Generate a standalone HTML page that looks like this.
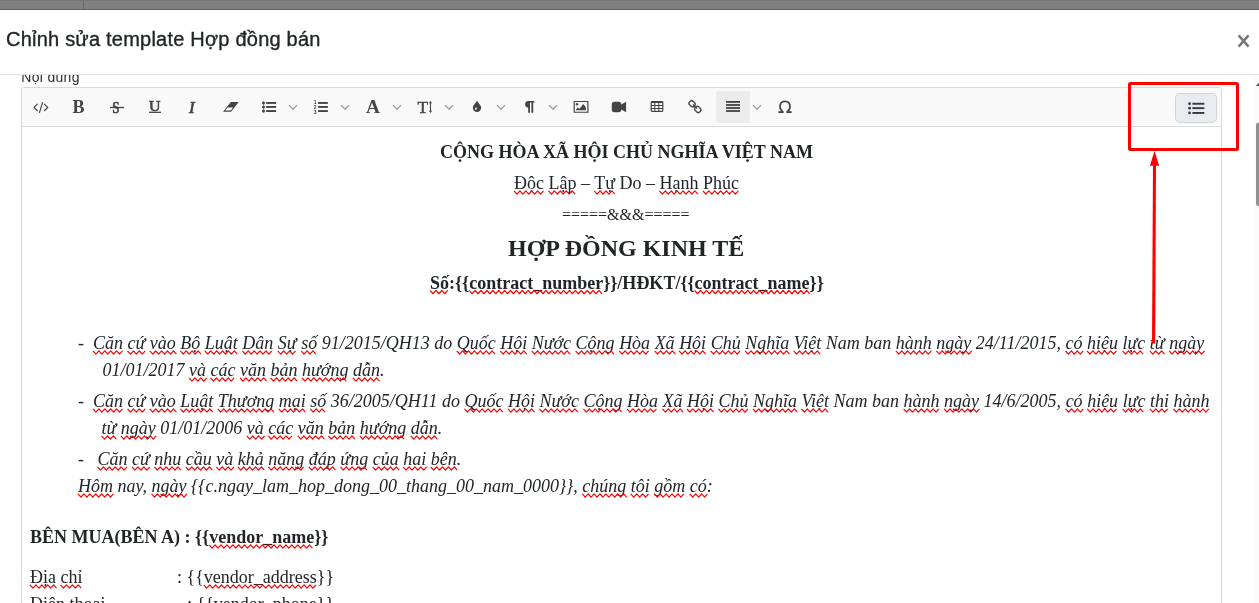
<!DOCTYPE html>
<html><head><meta charset="utf-8">
<style>
*{margin:0;padding:0;box-sizing:border-box}
html,body{width:1259px;height:603px;overflow:hidden;background:#fff}
body{position:relative;font-family:"Liberation Sans",sans-serif;color:#212529}
#doc,#tb,#title,#body{will-change:transform}
#title{-webkit-text-stroke:0.35px #212529;letter-spacing:0.22px}
.a{position:absolute}
.t{position:absolute;white-space:pre;line-height:20px}
.sf{font-family:"Liberation Serif",serif;color:#212529}
.it{font-style:italic}
.sq{}
#topbar{left:0;top:0;width:1259px;height:10px;background:#808080;border-top:1px solid #747474;border-bottom:1px solid #5f5f5f}
#title{left:6px;top:29px;font-size:20px;color:#212529}
#hdrline{left:0;top:74px;width:1259px;height:1px;background:#dee2e6}
#body{left:0;top:75px;width:1253px;height:528px;overflow:hidden}
#scroll{left:1253px;top:76px;width:6px;height:527px;background:#fafafa}
#editor{left:21px;top:12px;width:1201px;height:600px;border:1px solid #dadada;border-radius:3px;background:#fff}
#toolbar{left:0;top:0;width:1199px;height:37px;background:#f9f9f9;border-radius:2px 2px 0 0}
#tbline{left:0;top:38px;width:1199px;height:1px;background:#dadada}
</style></head><body>
<div class="a" id="topbar"></div>
<div class="a" style="left:83px;top:1px;width:1px;height:8px;background:#666"></div>
<div class="t" id="title">Chỉnh sửa template Hợp đồng bán</div>
<svg class="a" style="left:1236px;top:33px" width="16" height="16" viewBox="0 0 16 16"><path d="M2.6 2.4 L12.6 13.6 M12.6 2.4 L2.6 13.6" stroke="#777" stroke-width="2.5"/></svg>
<div class="a" id="hdrline"></div>
<div class="a" id="body">
  <div class="t" style="left:21.3px;top:-7.85px;font-size:14px;color:#2b2f33;letter-spacing:0.3px">Nội dung</div>
  <div class="a" id="editor">
    <div class="a" id="toolbar"></div><div class="a" id="tbline"></div>
  </div>
</div>
<div class="a" id="scroll"></div>

<svg id="tb" class="a" style="left:0;top:0" width="1259" height="603" viewBox="0 0 1259 603">
<g fill="none" stroke="#404040" stroke-width="1.15">
 <path d="M37.6 103.8 L34 107.4 L37.6 111 M44.1 103.8 L47.7 107.4 L44.1 111 M42.6 102.2 L39.4 112.8"/>
</g>
<path d="M719 91 H750 V123 H719 A3 3 0 0 1 716 120 V94 A3 3 0 0 1 719 91 Z" fill="#ececec"/>
<g font-family="Liberation Serif" fill="#444">
 <text x="72.6" y="113" font-size="18" font-weight="bold">B</text>
 <text x="112.2" y="113" font-size="17" stroke="#444" stroke-width="0.7" transform="translate(112.2 0) scale(0.78 1) translate(-112.2 0)">S</text>
 <text x="148.9" y="110.9" font-size="14.6" stroke="#444" stroke-width="0.6" transform="translate(148.9 0) scale(1.09 1) translate(-148.9 0)">U</text>
 <text x="189" y="112.9" font-size="16.8" font-style="italic" stroke="#444" stroke-width="0.7">I</text>
 <text x="366" y="113" font-size="18" font-weight="bold" transform="translate(366 0) scale(1.07 1) translate(-366 0)">A</text>
 <text x="417.6" y="112.8" font-size="17.4" stroke="#444" stroke-width="0.45">T</text>
 
</g>
<g stroke="#444" stroke-width="1.3" fill="none">
 <path d="M110 107.5 H124.2"/>
 <path d="M149 112.3 H161"/>
 <path d="M430.5 102 V112" stroke-width="1.1"/>
</g>
<g fill="#444">
 <path d="M428.9 103.3 L430.5 100.9 L432.1 103.3 Z M428.9 110.7 L430.5 113.1 L432.1 110.7 Z"/>
 <!-- eraser -->
 <path d="M230.9 102.1 L238.7 102.1 L231.1 111.7 L223 111.7 Z M227.6 107.6 L233.1 107.6 L230.8 110.6 L225.1 110.6 Z" fill-rule="evenodd"/>
 <!-- bullet list -->
 <circle cx="263.5" cy="102.9" r="1.5"/><circle cx="263.5" cy="106.9" r="1.5"/><circle cx="263.5" cy="111" r="1.5"/>
 <rect x="263.2" y="101" width="0.6" height="12" opacity="0.7"/>
 <rect x="266.1" y="102" width="10" height="1.9"/><rect x="266.1" y="106" width="10" height="1.9"/><rect x="266.1" y="110.1" width="10" height="1.9"/>
 <!-- numbered -->
 <rect x="318.1" y="102" width="9.8" height="1.9"/><rect x="318.1" y="106" width="9.8" height="1.9"/><rect x="318.1" y="110.1" width="9.8" height="1.9"/>
 <!-- drop -->
 <path d="M477 100.4 C478 103 481.2 105 481.2 107.8 A4.2 4.2 0 0 1 472.8 107.8 C472.8 105 476 103 477 100.4 Z M475 107.8 h1.8 v1.8 h-1.8 Z" fill-rule="evenodd"/>
 <!-- pilcrow -->
 <path d="M528.8 101 H534.3 V102.6 H533.2 V112.8 H531.4 V102.6 H530 V112.8 H528.2 V107.8 A3.4 3.4 0 0 1 528.8 101 Z"/>
 <!-- image -->
 <path d="M573.6 101 H588.5 V112.8 H573.6 Z M574.8 102.1 V111.7 H587.3 V102.1 Z" fill-rule="evenodd"/>
 <circle cx="577" cy="104.3" r="1.25"/>
 <path d="M576.1 110.3 V109.5 L577.9 107.5 L579.6 108.7 L583.3 104.1 L585.8 107.2 V110.3 Z"/>
 <!-- video -->
 <rect x="611.8" y="101.8" width="9.5" height="10.4" rx="2.6"/>
 <path d="M620 105.2 L626.1 101.8 V112.2 L620 108.8 Z"/>
 <!-- table -->
 <path d="M652 101 H662 A1.4 1.4 0 0 1 663.4 102.4 V110.5 A1.4 1.4 0 0 1 662 111.9 H652 A1.4 1.4 0 0 1 650.6 110.5 V102.4 A1.4 1.4 0 0 1 652 101 Z M651.8 103 V105 H654.3 V103 Z M655.3 103 V105 H658.3 V103 Z M659.3 103 V105 H662.2 V103 Z M651.8 105.9 V108 H654.3 V105.9 Z M655.3 105.9 V108 H658.3 V105.9 Z M659.3 105.9 V108 H662.2 V105.9 Z M651.8 108.9 V110.8 H654.3 V108.9 Z M655.3 108.9 V110.8 H658.3 V108.9 Z M659.3 108.9 V110.8 H662.2 V108.9 Z" fill-rule="evenodd"/>
 <!-- justify -->
 <rect x="726" y="101" width="14" height="1.8"/><rect x="726" y="104.1" width="14" height="1.8"/><rect x="726" y="107.1" width="14" height="1.8"/><rect x="726" y="110.1" width="14" height="1.8"/>
</g>
<g font-family="Liberation Sans" fill="#444" font-weight="bold" font-size="5">
 <text x="313.8" y="104.3">1</text><text x="313.8" y="108.8">2</text><text x="313.8" y="113.6">3</text>
</g>
<path d="M783 112.3 C781.2 111 780 109 780 106.6 C780 103.1 782.2 101.4 785 101.4 C787.8 101.4 790 103.1 790 106.6 C790 109 788.8 111 787 112.3 M778.3 112.2 H783.7 M786.3 112.2 H791.7" fill="none" stroke="#444" stroke-width="1.7"/>
<!-- link -->
<g fill="none" stroke="#444" stroke-width="1.35">
 <rect x="-3.1" y="-2.5" width="6.2" height="5" rx="2" transform="translate(692.1 103.7) rotate(45)"/>
 <rect x="-3.1" y="-2.5" width="6.2" height="5" rx="2" transform="translate(697.8 109.4) rotate(45)"/>
 <path d="M692.9 104.5 L697 108.6"/>
</g>
<!-- chevrons -->
<g fill="none" stroke="#909090" stroke-width="1.15">
 <path d="M289 105.2 L293 109.2 L297 105.2"/>
 <path d="M341 105.2 L345 109.2 L349 105.2"/>
 <path d="M393 105.2 L397 109.2 L401 105.2"/>
 <path d="M445 105.2 L449 109.2 L453 105.2"/>
 <path d="M497 105.2 L501 109.2 L505 105.2"/>
 <path d="M549 105.2 L553 109.2 L557 105.2"/>
 <path d="M753 105.2 L757 109.2 L761 105.2"/>
</g>
<!-- TOC button -->
<rect x="1175.5" y="93.5" width="41" height="29" rx="4.5" fill="#e9ecef" stroke="#ced4da" stroke-width="1"/>
<g fill="#343a40">
 <circle cx="1189.6" cy="103.7" r="1.4"/><circle cx="1189.6" cy="108.2" r="1.4"/><circle cx="1189.6" cy="112.9" r="1.4"/>
 <rect x="1192.4" y="102.8" width="11.9" height="1.9"/><rect x="1192.4" y="107.2" width="11.9" height="1.9"/><rect x="1192.4" y="112" width="11.9" height="1.9"/>
</g>
<!-- scrollbar -->
<path d="M1255.8 86 L1260 81.8 L1264.2 86 Z" fill="#505050"/>
<rect x="1256" y="122.5" width="8" height="83.7" rx="3" fill="#8f8f8f"/>
</svg>

<!-- document text (page coords) -->
<div id="doc">
<div class="t sf" style="left:440px;top:142px;font-size:18px;font-weight:bold">CỘNG HÒA XÃ HỘI CHỦ NGHĨA VIỆT NAM</div>
<div class="t sf" style="left:514px;top:173px;font-size:18px"><span class="sq">Độc</span> <span class="sq">Lập</span> – <span class="sq">Tự</span> Do – <span class="sq">Hạnh</span> <span class="sq">Phúc</span></div>
<div class="t sf" style="left:562px;top:205px;font-size:16px">=====&amp;&amp;&amp;=====</div>
<div class="t sf" style="left:508px;top:237.5px;font-size:24px;font-weight:bold">HỢP ĐỒNG KINH TẾ</div>
<div class="t sf" style="left:430px;top:272.6px;font-size:18px;font-weight:bold"><span class="sq">Số</span>:{{<span class="sq">contract_number</span>}}/HĐKT/{{<span class="sq">contract_name</span>}}</div>
<div class="t sf it" style="left:78px;top:333px;font-size:18px">-</div>
<div class="t sf it" style="left:93px;top:333px;font-size:18px"><span class="sq">Căn</span> <span class="sq">cứ</span> <span class="sq">vào</span> <span class="sq">Bộ</span> <span class="sq">Luật</span> <span class="sq">Dân</span> <span class="sq">Sự</span> <span class="sq">số</span> 91/2015/QH13 do <span class="sq">Quốc</span> <span class="sq">Hội</span> <span class="sq">Nước</span> <span class="sq">Cộng</span> <span class="sq">Hòa</span> <span class="sq">Xã</span> <span class="sq">Hội</span> <span class="sq">Chủ</span> <span class="sq">Nghĩa</span> <span class="sq">Việt</span> Nam ban <span class="sq">hành</span> <span class="sq">ngày</span> 24/11/2015, <span class="sq">có</span> <span class="sq">hiệu</span> <span class="sq">lực</span> <span class="sq">từ</span> <span class="sq">ngày</span></div>
<div class="t sf it" style="left:102.5px;top:360px;font-size:18px">01/01/2017 <span class="sq">và</span> <span class="sq">các</span> <span class="sq">văn</span> <span class="sq">bản</span> <span class="sq">hướng</span> <span class="sq">dẫn</span>.</div>
<div class="t sf it" style="left:78px;top:391px;font-size:18px">-</div>
<div class="t sf it" style="left:93px;top:391px;font-size:18px"><span class="sq">Căn</span> <span class="sq">cứ</span> <span class="sq">vào</span> <span class="sq">Luật</span> <span class="sq">Thương</span> <span class="sq">mại</span> <span class="sq">số</span> 36/2005/QH11 do <span class="sq">Quốc</span> <span class="sq">Hội</span> <span class="sq">Nước</span> <span class="sq">Cộng</span> <span class="sq">Hòa</span> <span class="sq">Xã</span> <span class="sq">Hội</span> <span class="sq">Chủ</span> <span class="sq">Nghĩa</span> <span class="sq">Việt</span> Nam ban <span class="sq">hành</span> <span class="sq">ngày</span> 14/6/2005, <span class="sq">có</span> <span class="sq">hiệu</span> <span class="sq">lực</span> <span class="sq">thi</span> <span class="sq">hành</span></div>
<div class="t sf it" style="left:101.5px;top:418px;font-size:18px"><span class="sq">từ</span> <span class="sq">ngày</span> 01/01/2006 <span class="sq">và</span> <span class="sq">các</span> <span class="sq">văn</span> <span class="sq">bản</span> <span class="sq">hướng</span> <span class="sq">dẫn</span>.</div>
<div class="t sf it" style="left:78px;top:449px;font-size:18px">-</div>
<div class="t sf it" style="left:97.5px;top:449px;font-size:18px"><span class="sq">Căn</span> <span class="sq">cứ</span> <span class="sq">nhu</span> <span class="sq">cầu</span> <span class="sq">và</span> <span class="sq">khả</span> <span class="sq">năng</span> <span class="sq">đáp</span> <span class="sq">ứng</span> <span class="sq">của</span> <span class="sq">hai</span> <span class="sq">bên</span>.</div>
<div class="t sf it" style="left:78px;top:476px;font-size:18px"><span class="sq">Hôm</span> nay, <span class="sq">ngày</span> {{c.ngay_lam_hop_dong_00_thang_00_nam_0000}}, <span class="sq">chúng</span> <span class="sq">tôi</span> <span class="sq">gồm</span> <span class="sq">có</span>:</div>
<div class="t sf" style="left:30px;top:527px;font-size:18px;font-weight:bold">BÊN MUA(BÊN A) : {{<span class="sq">vendor_name</span>}}</div>
<div class="t sf" style="left:30px;top:567px;font-size:18px"><span class="sq">Địa</span> <span class="sq">chỉ</span></div>
<div class="t sf" style="left:177px;top:567px;font-size:18px">: {{<span class="sq">vendor_address</span>}}</div>
<div class="t sf" style="left:30px;top:594px;font-size:18px"><span class="sq">Điện</span> <span class="sq">thoại</span></div>
<div class="t sf" style="left:187px;top:594px;font-size:18px">: {{<span class="sq">vendor_phone</span>}}</div>
</div>
<svg id="ann" class="a" style="left:0;top:0" width="1259" height="603">
<rect x="1129.5" y="83.5" width="108" height="66" rx="1" fill="none" stroke="#ff0000" stroke-width="3"/>
<path d="M1154.5 151 L1159.1 165.7 L1149.9 165.7 Z" fill="#ff0000"/>
<path d="M1153 163 H1156 L1155.2 343.6 H1152 Z" fill="#ff0000"/>
</svg>
<svg id="sqs" class="a" style="left:0;top:0;will-change:transform" width="1259" height="603"><path d="M514.00 190.79 L516.95 194.14 L519.90 190.79 L522.85 194.14 L525.80 190.79 L528.75 194.14 L531.70 190.79 L534.65 194.14 L537.60 190.79 L540.55 194.14 L543.50 190.79 M548.50 190.79 L551.45 194.14 L554.40 190.79 L557.35 194.14 L560.30 190.79 L563.25 194.14 L566.20 190.79 L569.15 194.14 L572.10 190.79 L575.05 194.14 M594.17 190.79 L597.12 194.14 L600.07 190.79 L603.02 194.14 L605.97 190.79 L608.92 194.14 L611.87 190.79 L614.82 194.14 M659.44 190.79 L662.39 194.14 L665.34 190.79 L668.29 194.14 L671.24 190.79 L674.19 194.14 L677.14 190.79 L680.09 194.14 L683.04 190.79 L685.99 194.14 L688.94 190.79 L691.89 194.14 L694.84 190.79 L697.79 194.14 M702.94 190.79 L705.89 194.14 L708.84 190.79 L711.79 194.14 L714.74 190.79 L717.69 194.14 L720.64 190.79 L723.59 194.14 L726.54 190.79 L729.49 194.14 L732.44 190.79 L735.39 194.14 L738.34 190.79 M430.00 290.38 L432.95 293.73 L435.90 290.38 L438.85 293.73 L441.80 290.38 L444.75 293.73 L447.70 290.38 M469.20 290.38 L472.15 293.73 L475.10 290.38 L478.05 293.73 L481.00 290.38 L483.95 293.73 L486.90 290.38 L489.85 293.73 L492.80 290.38 L495.75 293.73 L498.70 290.38 L501.65 293.73 L504.60 290.38 L507.55 293.73 L510.50 290.38 L513.45 293.73 L516.40 290.38 L519.35 293.73 L522.30 290.38 L525.25 293.73 L528.20 290.38 L531.15 293.73 L534.10 290.38 L537.05 293.73 L540.00 290.38 L542.95 293.73 L545.90 290.38 L548.85 293.73 L551.80 290.38 L554.75 293.73 L557.70 290.38 L560.65 293.73 L563.60 290.38 L566.55 293.73 L569.50 290.38 L572.45 293.73 L575.40 290.38 L578.35 293.73 L581.30 290.38 L584.25 293.73 L587.20 290.38 L590.15 293.73 L593.10 290.38 L596.05 293.73 L599.00 290.38 L601.95 293.73 M694.58 290.38 L697.53 293.73 L700.48 290.38 L703.43 293.73 L706.38 290.38 L709.33 293.73 L712.28 290.38 L715.23 293.73 L718.18 290.38 L721.13 293.73 L724.08 290.38 L727.03 293.73 L729.98 290.38 L732.93 293.73 L735.88 290.38 L738.83 293.73 L741.78 290.38 L744.73 293.73 L747.68 290.38 L750.63 293.73 L753.58 290.38 L756.53 293.73 L759.48 290.38 L762.43 293.73 L765.38 290.38 L768.33 293.73 L771.28 290.38 L774.23 293.73 L777.18 290.38 L780.13 293.73 L783.08 290.38 L786.03 293.73 L788.98 290.38 L791.93 293.73 L794.88 290.38 L797.83 293.73 L800.78 290.38 L803.73 293.73 L806.68 290.38 L809.63 293.73 M93.00 350.79 L95.95 354.14 L98.90 350.79 L101.85 354.14 L104.80 350.79 L107.75 354.14 L110.70 350.79 L113.65 354.14 L116.60 350.79 L119.55 354.14 L122.50 350.79 M127.52 350.79 L130.47 354.14 L133.42 350.79 L136.37 354.14 L139.32 350.79 L142.27 354.14 L145.22 350.79 M149.83 350.79 L152.78 354.14 L155.73 350.79 L158.68 354.14 L161.63 350.79 L164.58 354.14 L167.53 350.79 L170.48 354.14 L173.43 350.79 L176.38 354.14 M180.33 350.79 L183.28 354.14 L186.23 350.79 L189.18 354.14 L192.13 350.79 L195.08 354.14 L198.03 350.79 L200.98 354.14 M204.83 350.79 L207.78 354.14 L210.73 350.79 L213.68 354.14 L216.63 350.79 L219.58 354.14 L222.53 350.79 L225.48 354.14 L228.43 350.79 L231.38 354.14 L234.33 350.79 L237.28 354.14 M242.34 350.79 L245.29 354.14 L248.24 350.79 L251.19 354.14 L254.14 350.79 L257.09 354.14 L260.04 350.79 L262.99 354.14 L265.94 350.79 L268.89 354.14 L271.84 350.79 M277.84 350.79 L280.79 354.14 L283.74 350.79 L286.69 354.14 L289.64 350.79 L292.59 354.14 L295.54 350.79 M301.17 350.79 L304.12 354.14 L307.07 350.79 L310.02 354.14 L312.97 350.79 L315.92 354.14 M456.69 350.79 L459.64 354.14 L462.59 350.79 L465.54 354.14 L468.49 350.79 L471.44 354.14 L474.39 350.79 L477.34 354.14 L480.29 350.79 L483.24 354.14 L486.19 350.79 L489.14 354.14 L492.09 350.79 L495.04 354.14 M500.19 350.79 L503.14 354.14 L506.09 350.79 L509.04 354.14 L511.99 350.79 L514.94 354.14 L517.89 350.79 L520.84 354.14 L523.79 350.79 L526.74 354.14 M531.69 350.79 L534.64 354.14 L537.59 350.79 L540.54 354.14 L543.49 350.79 L546.44 354.14 L549.39 350.79 L552.34 354.14 L555.29 350.79 L558.24 354.14 L561.19 350.79 L564.14 354.14 L567.09 350.79 L570.04 354.14 M575.61 350.79 L578.56 354.14 L581.51 350.79 L584.46 354.14 L587.41 350.79 L590.36 354.14 L593.31 350.79 L596.26 354.14 L599.21 350.79 L602.16 354.14 L605.11 350.79 L608.06 354.14 L611.01 350.79 L613.96 354.14 M619.12 350.79 L622.08 354.14 L625.03 350.79 L627.98 354.14 L630.93 350.79 L633.88 354.14 L636.83 350.79 L639.78 354.14 L642.73 350.79 L645.68 354.14 L648.63 350.79 M654.62 350.79 L657.58 354.14 L660.53 350.79 L663.48 354.14 L666.43 350.79 L669.38 354.14 L672.33 350.79 L675.28 354.14 M679.12 350.79 L682.08 354.14 L685.03 350.79 L687.98 354.14 L690.93 350.79 L693.88 354.14 L696.83 350.79 L699.78 354.14 L702.73 350.79 L705.68 354.14 M710.62 350.79 L713.58 354.14 L716.53 350.79 L719.48 354.14 L722.43 350.79 L725.38 354.14 L728.33 350.79 L731.28 354.14 L734.23 350.79 L737.18 354.14 L740.13 350.79 M745.14 350.79 L748.09 354.14 L751.04 350.79 L753.99 354.14 L756.94 350.79 L759.89 354.14 L762.84 350.79 L765.79 354.14 L768.74 350.79 L771.69 354.14 L774.64 350.79 L777.59 354.14 L780.54 350.79 L783.49 354.14 L786.44 350.79 L789.39 354.14 M793.66 350.79 L796.61 354.14 L799.56 350.79 L802.51 354.14 L805.46 350.79 L808.41 354.14 L811.36 350.79 L814.31 354.14 L817.26 350.79 L820.21 354.14 M895.83 350.79 L898.78 354.14 L901.73 350.79 L904.68 354.14 L907.63 350.79 L910.58 354.14 L913.53 350.79 L916.48 354.14 L919.43 350.79 L922.38 354.14 L925.33 350.79 L928.28 354.14 L931.23 350.79 M936.33 350.79 L939.28 354.14 L942.23 350.79 L945.18 354.14 L948.13 350.79 L951.08 354.14 L954.03 350.79 L956.98 354.14 L959.93 350.79 L962.88 354.14 L965.83 350.79 L968.78 354.14 L971.73 350.79 M1065.50 350.79 L1068.45 354.14 L1071.40 350.79 L1074.35 354.14 L1077.30 350.79 L1080.25 354.14 L1083.20 350.79 M1087.00 350.79 L1089.95 354.14 L1092.90 350.79 L1095.85 354.14 L1098.80 350.79 L1101.75 354.14 L1104.70 350.79 L1107.65 354.14 L1110.60 350.79 L1113.55 354.14 L1116.50 350.79 M1122.50 350.79 L1125.45 354.14 L1128.40 350.79 L1131.35 354.14 L1134.30 350.79 L1137.25 354.14 L1140.20 350.79 L1143.15 354.14 M1149.81 350.79 L1152.76 354.14 L1155.71 350.79 L1158.66 354.14 L1161.61 350.79 L1164.56 354.14 M1169.14 350.79 L1172.09 354.14 L1175.04 350.79 L1177.99 354.14 L1180.94 350.79 L1183.89 354.14 L1186.84 350.79 L1189.79 354.14 L1192.74 350.79 L1195.69 354.14 L1198.64 350.79 L1201.59 354.14 L1204.54 350.79 M189.02 377.79 L191.97 381.14 L194.92 377.79 L197.87 381.14 L200.82 377.79 L203.77 381.14 L206.72 377.79 M210.52 377.79 L213.47 381.14 L216.42 377.79 L219.37 381.14 L222.32 377.79 L225.27 381.14 L228.22 377.79 L231.17 381.14 L234.12 377.79 M240.00 377.79 L242.95 381.14 L245.90 377.79 L248.85 381.14 L251.80 377.79 L254.75 381.14 L257.70 377.79 L260.65 381.14 L263.60 377.79 L266.55 381.14 M270.50 377.79 L273.45 381.14 L276.40 377.79 L279.35 381.14 L282.30 377.79 L285.25 381.14 L288.20 377.79 L291.15 381.14 L294.10 377.79 L297.05 381.14 M302.00 377.79 L304.95 381.14 L307.90 377.79 L310.85 381.14 L313.80 377.79 L316.75 381.14 L319.70 377.79 L322.65 381.14 L325.60 377.79 L328.55 381.14 L331.50 377.79 L334.45 381.14 L337.40 377.79 L340.35 381.14 L343.30 377.79 L346.25 381.14 M352.94 377.79 L355.89 381.14 L358.84 377.79 L361.79 381.14 L364.74 377.79 L367.69 381.14 L370.64 377.79 L373.59 381.14 L376.54 377.79 L379.49 381.14 M93.00 408.79 L95.95 412.14 L98.90 408.79 L101.85 412.14 L104.80 408.79 L107.75 412.14 L110.70 408.79 L113.65 412.14 L116.60 408.79 L119.55 412.14 L122.50 408.79 M127.52 408.79 L130.47 412.14 L133.42 408.79 L136.37 412.14 L139.32 408.79 L142.27 412.14 L145.22 408.79 M149.83 408.79 L152.78 412.14 L155.73 408.79 L158.68 412.14 L161.63 408.79 L164.58 412.14 L167.53 408.79 L170.48 412.14 L173.43 408.79 L176.38 412.14 M180.33 408.79 L183.28 412.14 L186.23 408.79 L189.18 412.14 L192.13 408.79 L195.08 412.14 L198.03 408.79 L200.98 412.14 L203.93 408.79 L206.88 412.14 L209.83 408.79 L212.78 412.14 M217.84 408.79 L220.79 412.14 L223.74 408.79 L226.69 412.14 L229.64 408.79 L232.59 412.14 L235.54 408.79 L238.49 412.14 L241.44 408.79 L244.39 412.14 L247.34 408.79 L250.29 412.14 L253.24 408.79 L256.19 412.14 L259.14 408.79 L262.09 412.14 L265.04 408.79 L267.99 412.14 L270.94 408.79 L273.89 412.14 M278.78 408.79 L281.73 412.14 L284.68 408.79 L287.63 412.14 L290.58 408.79 L293.53 412.14 L296.48 408.79 L299.43 412.14 L302.38 408.79 L305.33 412.14 M310.28 408.79 L313.23 412.14 L316.18 408.79 L319.13 412.14 L322.08 408.79 L325.03 412.14 M464.47 408.79 L467.42 412.14 L470.37 408.79 L473.32 412.14 L476.27 408.79 L479.22 412.14 L482.17 408.79 L485.12 412.14 L488.07 408.79 L491.02 412.14 L493.97 408.79 L496.92 412.14 L499.87 408.79 L502.82 412.14 M507.97 408.79 L510.92 412.14 L513.87 408.79 L516.82 412.14 L519.77 408.79 L522.72 412.14 L525.67 408.79 L528.62 412.14 L531.57 408.79 L534.52 412.14 M539.47 408.79 L542.42 412.14 L545.37 408.79 L548.32 412.14 L551.27 408.79 L554.22 412.14 L557.17 408.79 L560.12 412.14 L563.07 408.79 L566.02 412.14 L568.97 408.79 L571.92 412.14 L574.87 408.79 L577.82 412.14 M583.39 408.79 L586.34 412.14 L589.29 408.79 L592.24 412.14 L595.19 408.79 L598.14 412.14 L601.09 408.79 L604.04 412.14 L606.99 408.79 L609.94 412.14 L612.89 408.79 L615.84 412.14 L618.79 408.79 L621.74 412.14 M626.91 408.79 L629.86 412.14 L632.81 408.79 L635.76 412.14 L638.71 408.79 L641.66 412.14 L644.61 408.79 L647.56 412.14 L650.51 408.79 L653.46 412.14 L656.41 408.79 M662.41 408.79 L665.36 412.14 L668.31 408.79 L671.26 412.14 L674.21 408.79 L677.16 412.14 L680.11 408.79 L683.06 412.14 M686.91 408.79 L689.86 412.14 L692.81 408.79 L695.76 412.14 L698.71 408.79 L701.66 412.14 L704.61 408.79 L707.56 412.14 L710.51 408.79 L713.46 412.14 M718.41 408.79 L721.36 412.14 L724.31 408.79 L727.26 412.14 L730.21 408.79 L733.16 412.14 L736.11 408.79 L739.06 412.14 L742.01 408.79 L744.96 412.14 L747.91 408.79 M752.92 408.79 L755.87 412.14 L758.82 408.79 L761.77 412.14 L764.72 408.79 L767.67 412.14 L770.62 408.79 L773.57 412.14 L776.52 408.79 L779.47 412.14 L782.42 408.79 L785.37 412.14 L788.32 408.79 L791.27 412.14 L794.22 408.79 L797.17 412.14 M801.44 408.79 L804.39 412.14 L807.34 408.79 L810.29 412.14 L813.24 408.79 L816.19 412.14 L819.14 408.79 L822.09 412.14 L825.04 408.79 L827.99 412.14 M903.61 408.79 L906.56 412.14 L909.51 408.79 L912.46 412.14 L915.41 408.79 L918.36 412.14 L921.31 408.79 L924.26 412.14 L927.21 408.79 L930.16 412.14 L933.11 408.79 L936.06 412.14 L939.01 408.79 M944.11 408.79 L947.06 412.14 L950.01 408.79 L952.96 412.14 L955.91 408.79 L958.86 412.14 L961.81 408.79 L964.76 412.14 L967.71 408.79 L970.66 412.14 L973.61 408.79 L976.56 412.14 L979.51 408.79 M1065.62 408.79 L1068.58 412.14 L1071.53 408.79 L1074.48 412.14 L1077.43 408.79 L1080.38 412.14 L1083.33 408.79 M1087.12 408.79 L1090.08 412.14 L1093.03 408.79 L1095.98 412.14 L1098.93 408.79 L1101.88 412.14 L1104.83 408.79 L1107.78 412.14 L1110.73 408.79 L1113.68 412.14 L1116.63 408.79 M1122.62 408.79 L1125.58 412.14 L1128.53 408.79 L1131.48 412.14 L1134.43 408.79 L1137.38 412.14 L1140.33 408.79 L1143.28 412.14 M1149.94 408.79 L1152.89 412.14 L1155.84 408.79 L1158.79 412.14 L1161.74 408.79 L1164.69 412.14 L1167.64 408.79 M1173.45 408.79 L1176.40 412.14 L1179.35 408.79 L1182.30 412.14 L1185.25 408.79 L1188.20 412.14 L1191.15 408.79 L1194.10 412.14 L1197.05 408.79 L1200.00 412.14 L1202.95 408.79 L1205.90 412.14 L1208.85 408.79 M101.50 435.79 L104.45 439.14 L107.40 435.79 L110.35 439.14 L113.30 435.79 L116.25 439.14 M120.83 435.79 L123.78 439.14 L126.73 435.79 L129.68 439.14 L132.63 435.79 L135.58 439.14 L138.53 435.79 L141.48 439.14 L144.43 435.79 L147.38 439.14 L150.33 435.79 L153.28 439.14 L156.23 435.79 M246.84 435.79 L249.79 439.14 L252.74 435.79 L255.69 439.14 L258.64 435.79 L261.59 439.14 L264.54 435.79 M268.34 435.79 L271.29 439.14 L274.24 435.79 L277.19 439.14 L280.14 435.79 L283.09 439.14 L286.04 435.79 L288.99 439.14 L291.94 435.79 M297.83 435.79 L300.78 439.14 L303.73 435.79 L306.68 439.14 L309.63 435.79 L312.58 439.14 L315.53 435.79 L318.48 439.14 L321.43 435.79 L324.38 439.14 M328.33 435.79 L331.28 439.14 L334.23 435.79 L337.18 439.14 L340.13 435.79 L343.08 439.14 L346.03 435.79 L348.98 439.14 L351.93 435.79 L354.88 439.14 M359.83 435.79 L362.78 439.14 L365.73 435.79 L368.68 439.14 L371.63 435.79 L374.58 439.14 L377.53 435.79 L380.48 439.14 L383.43 435.79 L386.38 439.14 L389.33 435.79 L392.28 439.14 L395.23 435.79 L398.18 439.14 L401.13 435.79 L404.08 439.14 M410.77 435.79 L413.72 439.14 L416.67 435.79 L419.62 439.14 L422.57 435.79 L425.52 439.14 L428.47 435.79 L431.42 439.14 L434.37 435.79 L437.32 439.14 M97.50 466.79 L100.45 470.14 L103.40 466.79 L106.35 470.14 L109.30 466.79 L112.25 470.14 L115.20 466.79 L118.15 470.14 L121.10 466.79 L124.05 470.14 L127.00 466.79 M132.02 466.79 L134.97 470.14 L137.92 466.79 L140.87 470.14 L143.82 466.79 L146.77 470.14 L149.72 466.79 M154.33 466.79 L157.28 470.14 L160.23 466.79 L163.18 470.14 L166.13 466.79 L169.08 470.14 L172.03 466.79 L174.98 470.14 L177.93 466.79 L180.88 470.14 M185.83 466.79 L188.78 470.14 L191.73 466.79 L194.68 470.14 L197.63 466.79 L200.58 470.14 L203.53 466.79 L206.48 470.14 L209.43 466.79 L212.38 470.14 M216.33 466.79 L219.28 470.14 L222.23 466.79 L225.18 470.14 L228.13 466.79 L231.08 470.14 L234.03 466.79 M237.83 466.79 L240.78 470.14 L243.73 466.79 L246.68 470.14 L249.63 466.79 L252.58 470.14 L255.53 466.79 L258.48 470.14 L261.43 466.79 L264.38 470.14 M268.33 466.79 L271.28 470.14 L274.23 466.79 L277.18 470.14 L280.13 466.79 L283.08 470.14 L286.03 466.79 L288.98 470.14 L291.93 466.79 L294.88 470.14 L297.83 466.79 L300.78 470.14 L303.73 466.79 M308.83 466.79 L311.78 470.14 L314.73 466.79 L317.68 470.14 L320.63 466.79 L323.58 470.14 L326.53 466.79 L329.48 470.14 L332.43 466.79 L335.38 470.14 M340.33 466.79 L343.28 470.14 L346.23 466.79 L349.18 470.14 L352.13 466.79 L355.08 470.14 L358.03 466.79 L360.98 470.14 L363.93 466.79 L366.88 470.14 M372.66 466.79 L375.61 470.14 L378.56 466.79 L381.51 470.14 L384.46 466.79 L387.41 470.14 L390.36 466.79 L393.31 470.14 L396.26 466.79 L399.21 470.14 M403.16 466.79 L406.11 470.14 L409.06 466.79 L412.01 470.14 L414.96 466.79 L417.91 470.14 L420.86 466.79 L423.81 470.14 L426.76 466.79 M430.67 466.79 L433.62 470.14 L436.57 466.79 L439.52 470.14 L442.47 466.79 L445.42 470.14 L448.37 466.79 L451.32 470.14 L454.27 466.79 L457.22 470.14 M78.00 493.79 L80.95 497.14 L83.90 493.79 L86.85 497.14 L89.80 493.79 L92.75 497.14 L95.70 493.79 L98.65 497.14 L101.60 493.79 L104.55 497.14 L107.50 493.79 L110.45 497.14 L113.40 493.79 M151.50 493.79 L154.45 497.14 L157.40 493.79 L160.35 497.14 L163.30 493.79 L166.25 497.14 L169.20 493.79 L172.15 497.14 L175.10 493.79 L178.05 497.14 L181.00 493.79 L183.95 497.14 L186.90 493.79 M582.28 493.79 L585.23 497.14 L588.18 493.79 L591.13 497.14 L594.08 493.79 L597.03 497.14 L599.98 493.79 L602.93 497.14 L605.88 493.79 L608.83 497.14 L611.78 493.79 L614.73 497.14 L617.68 493.79 L620.63 497.14 L623.58 493.79 L626.53 497.14 M630.78 493.79 L633.73 497.14 L636.68 493.79 L639.63 497.14 L642.58 493.79 L645.53 497.14 L648.48 493.79 M654.30 493.79 L657.25 497.14 L660.20 493.79 L663.15 497.14 L666.10 493.79 L669.05 497.14 L672.00 493.79 L674.95 497.14 L677.90 493.79 L680.85 497.14 L683.80 493.79 M689.80 493.79 L692.75 497.14 L695.70 493.79 L698.65 497.14 L701.60 493.79 L704.55 497.14 L707.50 493.79 M209.19 544.79 L212.14 548.14 L215.09 544.79 L218.04 548.14 L220.99 544.79 L223.94 548.14 L226.89 544.79 L229.84 548.14 L232.79 544.79 L235.74 548.14 L238.69 544.79 L241.64 548.14 L244.59 544.79 L247.54 548.14 L250.49 544.79 L253.44 548.14 L256.39 544.79 L259.34 548.14 L262.29 544.79 L265.24 548.14 L268.19 544.79 L271.14 548.14 L274.09 544.79 L277.04 548.14 L279.99 544.79 L282.94 548.14 L285.89 544.79 L288.84 548.14 L291.79 544.79 L294.74 548.14 L297.69 544.79 L300.64 548.14 L303.59 544.79 L306.54 548.14 L309.49 544.79 L312.44 548.14 M30.00 584.79 L32.95 588.14 L35.90 584.79 L38.85 588.14 L41.80 584.79 L44.75 588.14 L47.70 584.79 L50.65 588.14 L53.60 584.79 L56.55 588.14 M60.50 584.79 L63.45 588.14 L66.40 584.79 L69.35 588.14 L72.30 584.79 L75.25 588.14 L78.20 584.79 L81.15 588.14 M203.78 584.79 L206.73 588.14 L209.68 584.79 L212.63 588.14 L215.58 584.79 L218.53 588.14 L221.48 584.79 L224.43 588.14 L227.38 584.79 L230.33 588.14 L233.28 584.79 L236.23 588.14 L239.18 584.79 L242.13 588.14 L245.08 584.79 L248.03 588.14 L250.98 584.79 L253.93 588.14 L256.88 584.79 L259.83 588.14 L262.78 584.79 L265.73 588.14 L268.68 584.79 L271.63 588.14 L274.58 584.79 L277.53 588.14 L280.48 584.79 L283.43 588.14 L286.38 584.79 L289.33 588.14 L292.28 584.79 L295.23 588.14 L298.18 584.79 L301.13 588.14 L304.08 584.79 L307.03 588.14 L309.98 584.79 L312.93 588.14 L315.88 584.79 M30.00 611.79 L32.95 615.14 L35.90 611.79 L38.85 615.14 L41.80 611.79 L44.75 615.14 L47.70 611.79 L50.65 615.14 L53.60 611.79 L56.55 615.14 L59.50 611.79 L62.45 615.14 L65.40 611.79 M69.50 611.79 L72.45 615.14 L75.40 611.79 L78.35 615.14 L81.30 611.79 L84.25 615.14 L87.20 611.79 L90.15 615.14 L93.10 611.79 L96.05 615.14 L99.00 611.79 L101.95 615.14 L104.90 611.79 M213.78 611.79 L216.73 615.14 L219.68 611.79 L222.63 615.14 L225.58 611.79 L228.53 615.14 L231.48 611.79 L234.43 615.14 L237.38 611.79 L240.33 615.14 L243.28 611.79 L246.23 615.14 L249.18 611.79 L252.13 615.14 L255.08 611.79 L258.03 615.14 L260.98 611.79 L263.93 615.14 L266.88 611.79 L269.83 615.14 L272.78 611.79 L275.73 615.14 L278.68 611.79 L281.63 615.14 L284.58 611.79 L287.53 615.14 L290.48 611.79 L293.43 615.14 L296.38 611.79 L299.33 615.14 L302.28 611.79 L305.23 615.14 L308.18 611.79 L311.13 615.14 L314.08 611.79 L317.03 615.14" fill="none" stroke="#ff0000" stroke-width="1.2" stroke-linejoin="round"/></svg>
</body></html>
